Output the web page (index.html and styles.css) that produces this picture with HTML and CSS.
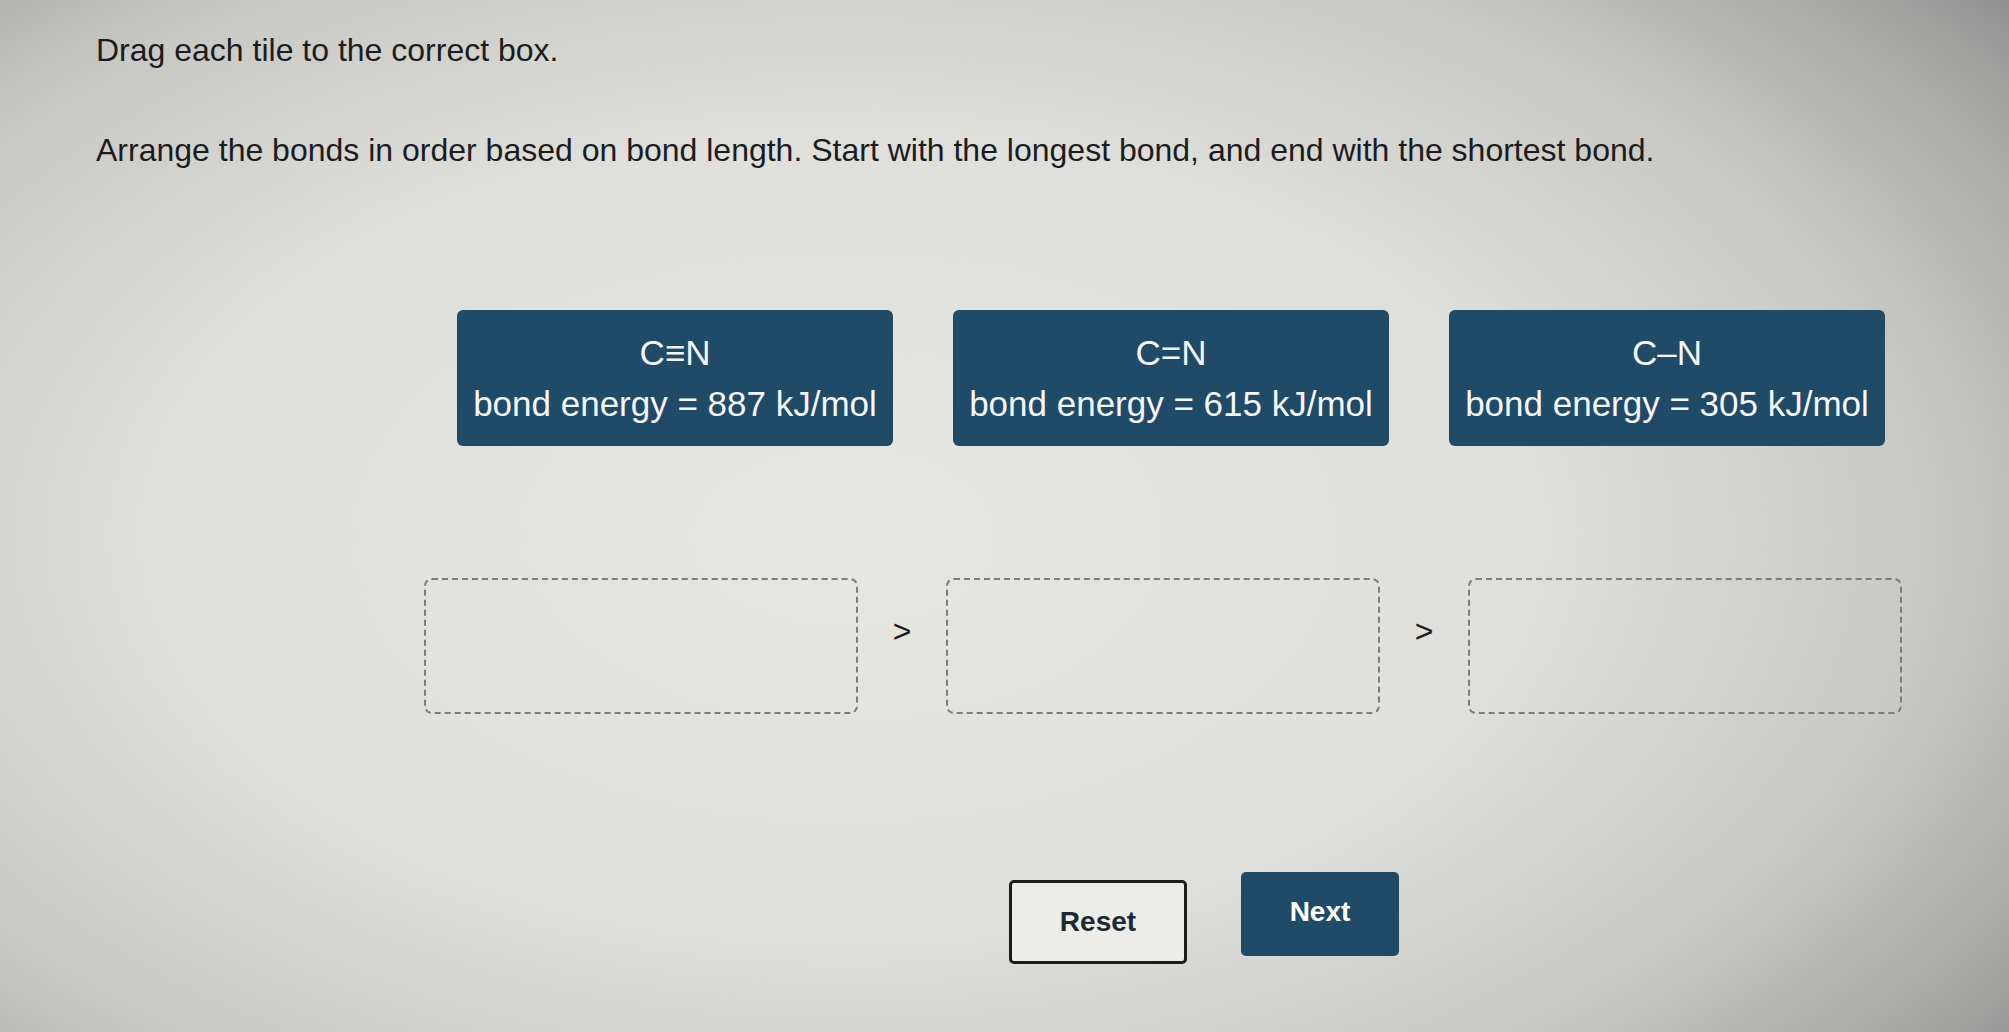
FILE: index.html
```html
<!DOCTYPE html>
<html lang="en">
<head>
    <meta charset="UTF-8">
    <meta name="viewport" content="width=device-width, initial-scale=1.0">
    <title>Bond Length</title>
    <link rel="stylesheet" href="styles.css">
</head>
<body>

    <div class="page">
        <p class="prompt">Drag each tile to the correct box.</p>
        <p class="prompt question">Arrange the bonds in order based on bond length. Start with the longest bond, and end with the shortest bond.</p>

        <!-- Tiles to drag -->
        <div class="tiles">
            <div class="tile" draggable="true">
                <div>C&#8801;N</div>
                <div>bond energy = 887 kJ/mol</div>
            </div>
            <div class="tile" draggable="true">
                <div>C=N</div>
                <div>bond energy = 615 kJ/mol</div>
            </div>
            <div class="tile" draggable="true">
                <div>C&#8211;N</div>
                <div>bond energy = 305 kJ/mol</div>
            </div>
        </div>

        <!-- Drop boxes -->
        <div class="slots">
            <div class="slot"></div>
            <span class="sep">&gt;</span>
            <div class="slot"></div>
            <span class="sep">&gt;</span>
            <div class="slot"></div>
        </div>

        <div class="actions">
            <button class="btn btn-reset">Reset</button>
            <button class="btn btn-next">Next</button>
        </div>
    </div>

</body>
</html>
```

FILE: styles.css
```css
html, body {
    height: 100%;
}

body {
    margin: 0;
    font-family: "Liberation Sans", Arial, sans-serif;
    color: #1c1c1c;
    background: radial-gradient(ellipse 75% 85% at 42% 52%, #e6e7e2 0%, #dfe0dc 45%, #c8c8c5 72%, #a3a3a2 92%, #8c8c8c 100%);
    overflow: hidden;
}

.page {
    padding: 30px 0 0 96px;
}

.prompt {
    font-size: 32px;
    line-height: 40px;
    margin: 0;
}

.question {
    margin-top: 60px;
}

.tiles {
    display: flex;
    gap: 60px;
    margin: 140px 0 0 361px;
}

.tile {
    width: 436px;
    height: 136px;
    box-sizing: border-box;
    padding: 17px 6px;
    background-color: #1f4a68;
    color: #f4f6f8;
    border-radius: 6px;
    font-size: 35px;
    line-height: 51px;
    text-align: center;
    cursor: grab;
}

.slots {
    display: flex;
    align-items: center;
    margin: 132px 0 0 328px;
}

.slot {
    width: 434px;
    height: 136px;
    box-sizing: border-box;
    border: 2px dashed #7c7c7c;
    border-radius: 8px;
}

.sep {
    width: 88px;
    text-align: center;
    font-size: 32px;
    margin-top: -30px;
}

.actions {
    display: flex;
    gap: 54px;
    margin: 158px 0 0 913px;
}

.btn {
    height: 84px;
    font-family: "Liberation Sans", Arial, sans-serif;
    font-size: 28px;
    font-weight: bold;
    border-radius: 5px;
    cursor: pointer;
}

.btn-reset {
    width: 178px;
    background-color: #ecece8;
    color: #1d2a33;
    border: 3px solid #1c1c1c;
    margin-top: 8px;
}

.btn-next {
    width: 158px;
    background-color: #1f4a68;
    color: #ffffff;
    border: none;
    padding-bottom: 6px;
}

.btn-next:hover {
    background-color: #183c55;
}
```
